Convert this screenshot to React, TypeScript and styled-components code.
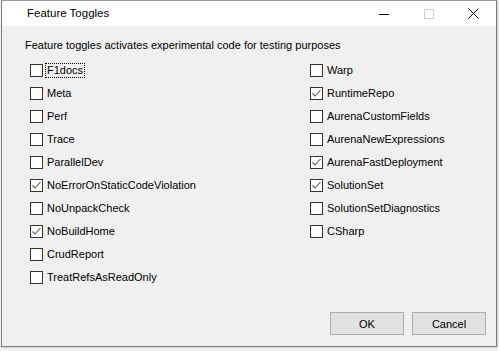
import React, { useState } from "react";
import styled, { createGlobalStyle } from "styled-components";

const GlobalStyle = createGlobalStyle`
  html, body {
    margin: 0;
    padding: 0;
    background: #dcdcdc;
    font-family: "Liberation Sans", Arial, sans-serif;
    font-size: 11px;
  }
`;

const Desktop = styled.div`
  width: 499px;
  height: 351px;
  padding-left: 1px;
  box-sizing: border-box;
  background: #f4f4f4;
`;

const Window = styled.div`
  display: flex;
  flex-direction: column;
  box-sizing: border-box;
  width: 496px;
  height: 347px;
  border: 1px solid #7a7a7a;
  border-top-color: #9a9a9a;
  background: #f0f0f0;
  box-shadow: 1px 1px 2px rgba(0, 0, 0, 0.15);
`;

const TitleBar = styled.div`
  display: flex;
  align-items: center;
  height: 25px;
  background: #fff;
  color: #000;
`;

const Title = styled.div`
  flex: 1;
  padding-left: 25px;
  font-size: 11.5px;
  line-height: 25px;
`;

const Caption = styled.div<{ disabled?: boolean }>`
  display: flex;
  align-items: center;
  justify-content: center;
  width: 45px;
  height: 25px;
  color: ${props => (props.disabled ? "#cccccc" : "#000")};
`;

const Body = styled.div`
  display: flex;
  flex: 1;
  flex-direction: column;
  padding: 12px 10px 11px 23px;
`;

const Description = styled.div`
  height: 15px;
  line-height: 15px;
  color: #000;
`;

const Columns = styled.div`
  display: grid;
  grid-template-columns: 280px 1fr;
  grid-template-rows: repeat(10, 23px);
  grid-auto-flow: column;
  margin-top: 11px;
  padding-left: 5px;
`;

const Row = styled.label`
  display: flex;
  align-items: center;
  height: 13px;
  gap: 3px;
  cursor: default;
`;

const Box = styled.span`
  display: flex;
  align-items: center;
  justify-content: center;
  box-sizing: border-box;
  width: 13px;
  height: 13px;
  border: 1px solid #333;
  background: #fff;
`;

const Text = styled.span<{ focused?: boolean }>`
  padding: 0 1px;
  line-height: 13px;
  color: #000;
  outline: ${props => (props.focused ? "1px dotted #000" : "none")};
  outline-offset: 0;
`;

const Footer = styled.div`
  display: flex;
  justify-content: flex-end;
  gap: 8px;
  margin-top: auto;
`;

const Button = styled.button`
  box-sizing: border-box;
  width: 74px;
  height: 23px;
  border: 1px solid #adadad;
  background: #e1e1e1;
  font-family: inherit;
  font-size: 11px;
  color: #000;
  padding: 0;
`;

const toggles: Array<[string, boolean]> = [
  ["F1docs", false],
  ["Meta", false],
  ["Perf", false],
  ["Trace", false],
  ["ParallelDev", false],
  ["NoErrorOnStaticCodeViolation", true],
  ["NoUnpackCheck", false],
  ["NoBuildHome", true],
  ["CrudReport", false],
  ["TreatRefsAsReadOnly", false],
  ["Warp", false],
  ["RuntimeRepo", true],
  ["AurenaCustomFields", false],
  ["AurenaNewExpressions", false],
  ["AurenaFastDeployment", true],
  ["SolutionSet", true],
  ["SolutionSetDiagnostics", false],
  ["CSharp", false],
];

function Check() {
  return (
    <svg width="11" height="11" viewBox="0 0 11 11">
      <polyline points="1.5,5.5 4,8 9.5,2" fill="none" stroke="#5a5a5a" strokeWidth="1.1" />
    </svg>
  );
}

export default function App() {
  const [checked, setChecked] = useState(
    () => new Set(toggles.filter(t => t[1]).map(t => t[0]))
  );

  const flip = (name: string) => {
    const copy = new Set(checked);
    if (copy.has(name)) {
      copy.delete(name);
    } else {
      copy.add(name);
    }
    setChecked(copy);
  };

  return (
    <>
      <GlobalStyle />
      <Desktop>
        <Window>
          <TitleBar>
            <Title>Feature Toggles</Title>
            <Caption>
              <svg width="10" height="10" viewBox="0 0 10 10">
                <line x1="0" y1="5.5" x2="10" y2="5.5" stroke="#000" strokeWidth="1" />
              </svg>
            </Caption>
            <Caption disabled>
              <svg width="10" height="10" viewBox="0 0 10 10">
                <rect x="0.5" y="0.5" width="9" height="9" fill="none" stroke="#ccc" strokeWidth="1" />
              </svg>
            </Caption>
            <Caption>
              <svg width="11" height="11" viewBox="0 0 11 11">
                <path d="M0.5 0.5 L10.5 10.5 M10.5 0.5 L0.5 10.5" stroke="#000" strokeWidth="1" />
              </svg>
            </Caption>
          </TitleBar>
          <Body>
            <Description>Feature toggles activates experimental code for testing purposes</Description>
            <Columns>
              {toggles.map(([name], i) => (
                <Row key={name} onClick={() => flip(name)}>
                  <Box>{checked.has(name) && <Check />}</Box>
                  <Text focused={i === 0}>{name}</Text>
                </Row>
              ))}
            </Columns>
            <Footer>
              <Button>OK</Button>
              <Button>Cancel</Button>
            </Footer>
          </Body>
        </Window>
      </Desktop>
    </>
  );
}
